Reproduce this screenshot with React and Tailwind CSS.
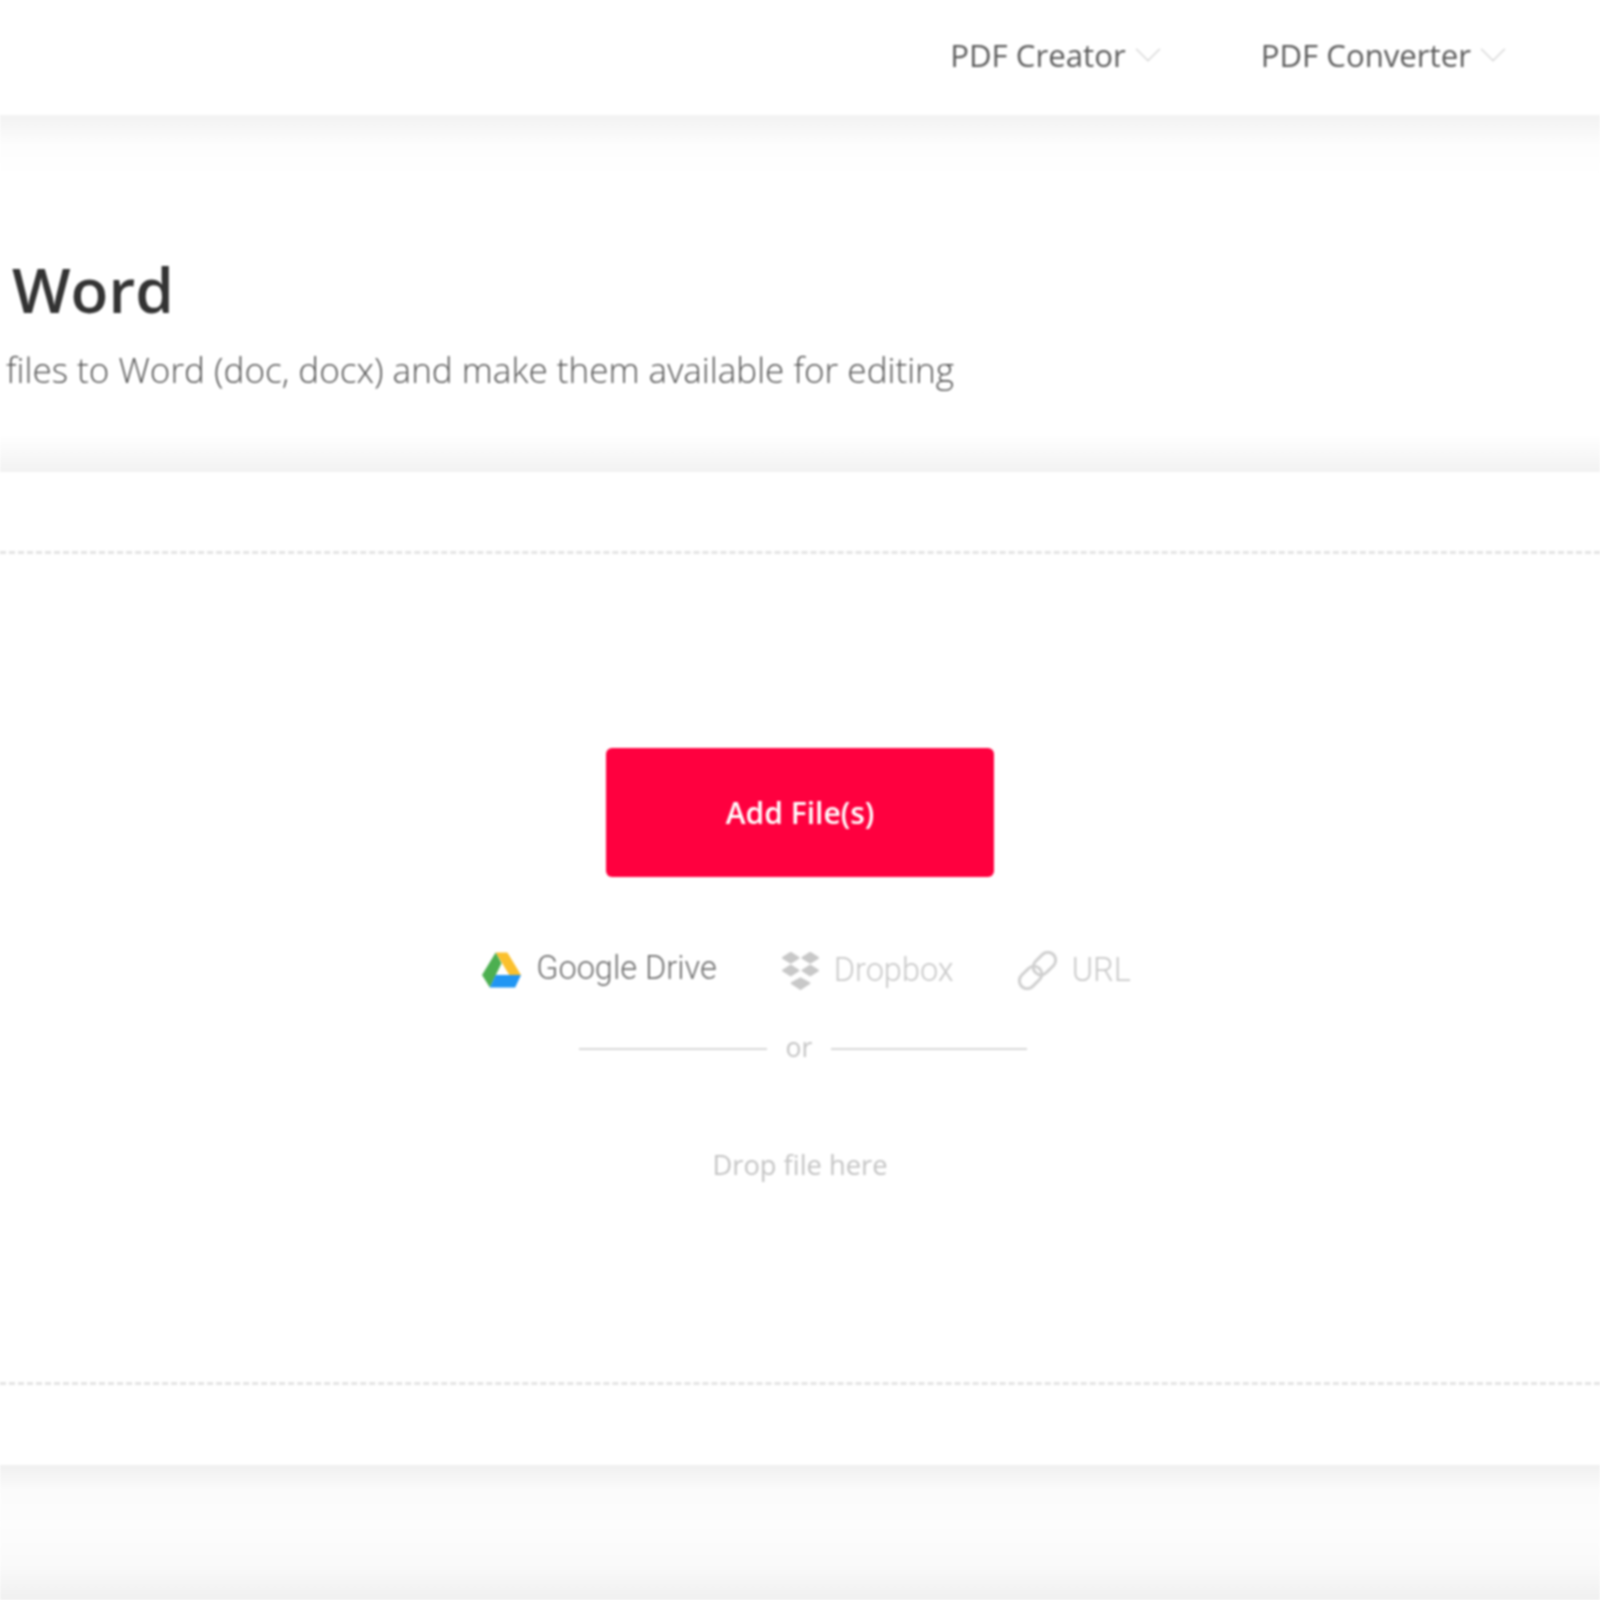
import React from "react";
import { ChevronDown } from "lucide-react";

function NavItem({ label, className }) {
    return (
        <div className={`flex items-center ${className}`}>
            <span className="-mt-[4px] text-[31.200px] leading-none text-[#5c5c5c]">{label}</span>
            <ChevronDown className="w-[46px] h-[46px] -ml-[1px] -my-[8px] -mt-[12px] text-[#d8d8d8]" strokeWidth={0.8} />
        </div>
    );
}

function DriveIcon() {
    return (
        <svg viewBox="0 0 40 36" className="w-[39px] h-[36px]">
            <path d="M14 0h12l14 23H28z" fill="#fbc02d" />
            <path d="M14 0l6 11L8 36 0 23z" fill="#4caf50" />
            <path d="M8 36l6-13h26l-6 13z" fill="#2196f3" />
        </svg>
    );
}

function DropboxIcon() {
    return (
        <svg viewBox="0 0 40 40" className="w-[39px] h-[39px]" fill="#c8c8c8" stroke="#c8c8c8" strokeWidth="2" strokeLinejoin="round">
            <path d="M10 2l8 5-8 5-8-5z" />
            <path d="M30 2l8 5-8 5-8-5z" />
            <path d="M10 15l8 5-8 5-8-5z" />
            <path d="M30 15l8 5-8 5-8-5z" />
            <path d="M20 28l9 5-9 6-9-6z" />
        </svg>
    );
}

function ChainIcon() {
    return (
        <svg viewBox="0 0 40 40" className="w-[39px] h-[39px]" fill="none" stroke="#cfcfcf" strokeWidth="3">
            <g transform="rotate(-45 20 20)">
                <rect x="-3" y="12" width="26" height="16" rx="8" />
                <rect x="17" y="12" width="26" height="16" rx="8" />
            </g>
        </svg>
    );
}

export default function App() {
    return (
        <div className="h-[1600px] overflow-hidden flex flex-col bg-white font-['Open_Sans',sans-serif] blur-[0.8px]">
            {/* Top nav */}
            <div className="h-[115px] flex items-center justify-end pr-[84px] shrink-0">
                <NavItem label="PDF Creator" className="mr-[90px]" />
                <NavItem label="PDF Converter" />
            </div>

            {/* Title */}
            <div className="h-[357px] shrink-0 bg-[linear-gradient(to_bottom,#f2f2f2,#fdfdfd_30px,#fff_60px,#fff_320px,#f2f2f2)] overflow-hidden">
                <h1 className="mt-[133px] pl-[12px] text-[62px] leading-[82px] font-semibold text-[#333]">Word</h1>
                <p className="mt-[16px] pl-[6px] text-[35.100px] leading-[46px] font-light text-[#555]">
                    files to Word (doc, docx) and make them available for editing
                </p>
            </div>

            {/* Upload area */}
            <div className="h-[993px] shrink-0 pt-[79px] bg-white">
                <div className="h-[834px] border-y-[3px] border-dashed border-[#e4e4e4] flex flex-col items-center pt-[194px]">
                    <button className="w-[388px] h-[129px] rounded-[6px] bg-[#ff003f] text-white text-[30px] font-semibold">
                        Add File(s)
                    </button>

                    <div className="mt-[73px] h-[40px] flex items-center font-['Roboto',sans-serif] text-[32.500px] font-light ml-[13px]">
                        <DriveIcon />
                        <span className="ml-[15px] -mt-[3px] text-[#6e6e6e]">Google Drive</span>
                        <div className="ml-[64px]"><DropboxIcon /></div>
                        <span className="ml-[14px] text-[#c8c8c8]">Dropbox</span>
                        <div className="ml-[64px]"><ChainIcon /></div>
                        <span className="ml-[15px] text-[#c8c8c8]">URL</span>
                    </div>

                    <div className="mt-[44px] ml-[6px] flex items-center">
                        <div className="w-[188px] h-[2px] bg-[#d8d8d8]" />
                        <span className="mx-[19px] pb-[4px] text-[26.500px] leading-none text-[#c4c4c4]">or</span>
                        <div className="w-[196px] h-[2px] bg-[#d8d8d8]" />
                    </div>

                    <div className="mt-[86px] text-[27.300px] leading-none text-[#c4c4c4]">Drop file here</div>
                </div>
            </div>

            {/* Footer band */}
            <div className="flex-1 bg-[linear-gradient(to_bottom,#f0f0f0,#fbfbfb_25px,#fdfdfd_60px,#fafafa_100px,#f0f0f0)]" />
        </div>
    );
}
